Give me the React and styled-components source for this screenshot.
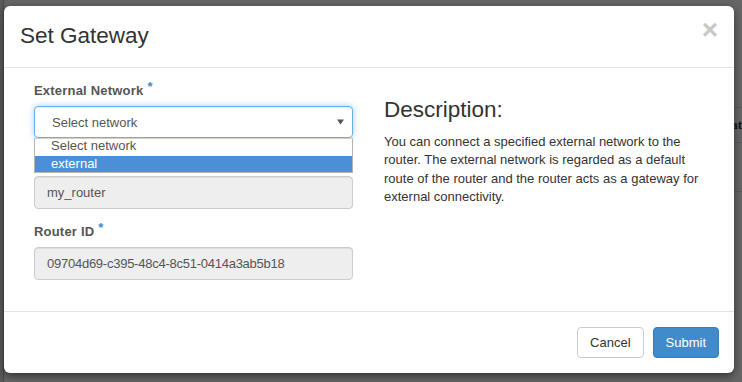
import React from "react";
import styled, { createGlobalStyle } from "styled-components";

const Global = createGlobalStyle`
  html, body { margin: 0; padding: 0; }
  body {
    background: #656565;
    font-family: "Liberation Sans", Arial, sans-serif;
    width: 742px;
    height: 382px;
    overflow: hidden;
  }
`;

const Page = styled.div`
  display: flex;
  align-items: flex-start;
  height: 382px;
`;

const LeftStrip = styled.div`
  width: 4px;
  height: 382px;
  flex: none;
  background: #5a5a5a;
  border-right: 1px solid #4a4a4a;
  box-sizing: border-box;
`;

const RightStrip = styled.div`
  flex: 1;
  height: 382px;
  overflow: hidden;
  display: flex;
  flex-direction: column;
  background: #666;
`;

const StripRow = styled.div`
  height: ${(p) => p.$h}px;
  border-bottom: 1px solid ${(p) => (p.$line ? "#5a5a5a" : "transparent")};
  font-family: "Liberation Serif", serif;
  font-weight: bold;
  font-size: 13px;
  color: #141414;
  display: flex;
  align-items: center;
  justify-content: flex-end;
  white-space: nowrap;
  flex: none;
`;

const Modal = styled.div`
  width: 730px;
  height: 367px;
  margin-top: 6px;
  flex: none;
  background: #fff;
  border-radius: 6px;
  box-shadow: 0 3px 9px rgba(0, 0, 0, 0.5);
  display: flex;
  flex-direction: column;
  overflow: hidden;
  position: relative;
`;

const Header = styled.div`
  height: 62px;
  flex: none;
  box-sizing: border-box;
  border-bottom: 1px solid #e5e5e5;
  padding: 0 16px 0 16px;
  display: flex;
  align-items: center;
  justify-content: space-between;
`;

const Title = styled.h4`
  margin: 0;
  font-size: 22.5px;
  font-weight: normal;
  color: #333;
  line-height: 1.1;
`;

const Close = styled.button`
  border: 0;
  background: none;
  padding: 0;
  margin-top: -13px;
  font-family: "Liberation Sans", Arial, sans-serif;
  font-size: 28px;
  font-weight: bold;
  line-height: 1;
  color: #c8c8c8;
  cursor: pointer;
`;

const Body = styled.div`
  flex: 1;
  padding: 14px 30px 0 30px;
  display: grid;
  grid-template-columns: 319px 320px;
  column-gap: 31px;
  align-items: start;
`;

const Group = styled.div`
  margin-bottom: 14px;
  position: relative;
`;

const Label = styled.label`
  display: block;
  font-size: 13px;
  font-weight: bold;
  color: #555;
  line-height: 18px;
  letter-spacing: 0.2px;
  margin-bottom: 6px;
`;

const Req = styled.span`
  color: #428bca;
  font-size: 13px;
  margin-left: 4px;
  position: relative;
  top: -4px;
`;

const SelectBox = styled.div`
  height: 32px;
  box-sizing: border-box;
  border: 1px solid #66afe9;
  border-radius: 4px;
  box-shadow: inset 0 1px 1px rgba(0, 0, 0, 0.075), 0 0 6px rgba(102, 175, 233, 0.6);
  padding: 0 8px 0 17px;
  display: flex;
  align-items: center;
  justify-content: space-between;
  font-size: 13px;
  color: #555;
  background: #fff;
`;

const DropList = styled.ul`
  position: absolute;
  left: 0;
  right: 0;
  top: 100%;
  margin: 0;
  padding: 0;
  list-style: none;
  background: #fff;
  border: 1px solid #b4b4b4;
  border-top-color: #d0d0d0;
  z-index: 5;
`;

const Option = styled.li`
  height: ${(p) => (p.$selected ? 16 : 17)}px;
  line-height: ${(p) => (p.$selected ? 15 : 14)}px;
  padding-left: 16px;
  font-size: 13px;
  color: ${(p) => (p.$selected ? "#fff" : "#555")};
  background: ${(p) => (p.$selected ? "#4a8fd8" : "#fff")};
`;

const Input = styled.div`
  height: 33px;
  box-sizing: border-box;
  border: 1px solid #ccc;
  border-radius: 4px;
  background: #eeeeee;
  box-shadow: inset 0 1px 1px rgba(0, 0, 0, 0.075);
  padding: 0 12px;
  display: flex;
  align-items: center;
  font-size: 13px;
  letter-spacing: ${(p) => (p.$tight ? "-0.25px" : "0")};
  color: #555;
`;

const Desc = styled.div`
  color: #333;
`;

const DescTitle = styled.h3`
  margin: 16px 0 10px 0;
  font-size: 22.5px;
  font-weight: normal;
  line-height: 1.1;
  color: #333;
`;

const DescText = styled.p`
  margin: 0;
  font-size: 13px;
  line-height: 18.4px;
  color: #333;
`;

const Footer = styled.div`
  height: 62px;
  flex: none;
  box-sizing: border-box;
  border-top: 1px solid #e5e5e5;
  padding: 15px 15px;
  display: flex;
  justify-content: flex-end;
  gap: 9px;
`;

const Button = styled.button`
  height: 31px;
  box-sizing: border-box;
  padding: 0 12px;
  border-radius: 4px;
  font-family: "Liberation Sans", Arial, sans-serif;
  font-size: 13px;
  border: 1px solid ${(p) => (p.$primary ? "#357ebd" : "#ccc")};
  background: ${(p) => (p.$primary ? "#428bca" : "#fff")};
  color: ${(p) => (p.$primary ? "#fff" : "#333")};
  min-width: 66px;
`;

const Arrow = () => (
  <svg width="7" height="6" viewBox="0 0 7 6" aria-hidden="true">
    <path d="M0 0.5 L7 0.5 L3.5 5.5 Z" fill="#555" />
  </svg>
);

export default function App() {
  return (
    <>
      <Global />
      <Page>
        <LeftStrip />
        <Modal>
          <Header>
            <Title>Set Gateway</Title>
            <Close aria-label="Close">×</Close>
          </Header>
          <Body>
            <div>
              <Group>
                <Label>
                  External Network<Req>*</Req>
                </Label>
                <SelectBox>
                  <span>Select network</span>
                  <Arrow />
                </SelectBox>
                <DropList>
                  <Option>Select network</Option>
                  <Option $selected>external</Option>
                </DropList>
              </Group>
              <Group>
                <Label>Router Name</Label>
                <Input>my_router</Input>
              </Group>
              <Group>
                <Label>
                  Router ID<Req>*</Req>
                </Label>
                <Input $tight>09704d69-c395-48c4-8c51-0414a3ab5b18</Input>
              </Group>
            </div>
            <Desc>
              <DescTitle>Description:</DescTitle>
              <DescText>
                You can connect a specified external network to the router. The
                external network is regarded as a default route of the router and
                the router acts as a gateway for external connectivity.
              </DescText>
            </Desc>
          </Body>
          <Footer>
            <Button>Cancel</Button>
            <Button $primary>Submit</Button>
          </Footer>
        </Modal>
        <RightStrip>
          <StripRow $h={107} $line />
          <StripRow $h={34} $line>
            <span>Stat</span>
          </StripRow>
          <StripRow $h={48} $line />
        </RightStrip>
      </Page>
    </>
  );
}
